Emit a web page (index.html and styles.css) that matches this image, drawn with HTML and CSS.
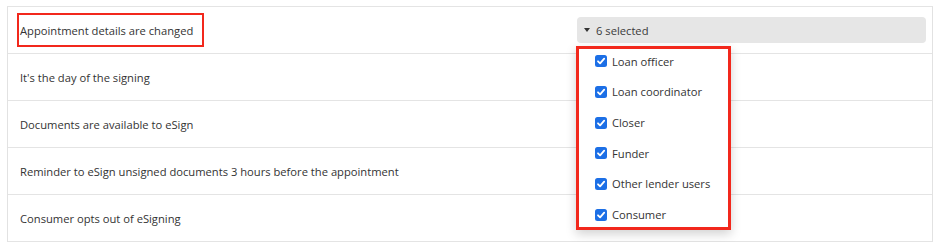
FILE: index.html
```html
<!DOCTYPE html>
<html lang="en">
<head>
    <meta charset="UTF-8">
    <title>Notification settings</title>
    <link rel="stylesheet" href="styles.css">
</head>
<body>
    <div class="table">
        <div class="row">
            <div class="event"><span class="mark">Appointment details are changed</span></div>
            <div class="control">
                <div class="select">
                    <span class="caret"></span>
                    <span>6 selected</span>
                </div>
                <div class="menu">
                    <label class="option"><svg class="check" viewBox="0 0 12 12"><rect width="12" height="12" rx="2.5"/><path d="M3 6.3l2.1 2.1L9.2 3.6"/></svg>Loan officer</label>
                    <label class="option"><svg class="check" viewBox="0 0 12 12"><rect width="12" height="12" rx="2.5"/><path d="M3 6.3l2.1 2.1L9.2 3.6"/></svg>Loan coordinator</label>
                    <label class="option"><svg class="check" viewBox="0 0 12 12"><rect width="12" height="12" rx="2.5"/><path d="M3 6.3l2.1 2.1L9.2 3.6"/></svg>Closer</label>
                    <label class="option"><svg class="check" viewBox="0 0 12 12"><rect width="12" height="12" rx="2.5"/><path d="M3 6.3l2.1 2.1L9.2 3.6"/></svg>Funder</label>
                    <label class="option"><svg class="check" viewBox="0 0 12 12"><rect width="12" height="12" rx="2.5"/><path d="M3 6.3l2.1 2.1L9.2 3.6"/></svg>Other lender users</label>
                    <label class="option"><svg class="check" viewBox="0 0 12 12"><rect width="12" height="12" rx="2.5"/><path d="M3 6.3l2.1 2.1L9.2 3.6"/></svg>Consumer</label>
                </div>
            </div>
        </div>
        <div class="row"><div class="event">It's the day of the signing</div></div>
        <div class="row"><div class="event">Documents are available to eSign</div></div>
        <div class="row"><div class="event">Reminder to eSign unsigned documents 3 hours before the appointment</div></div>
        <div class="row"><div class="event">Consumer opts out of eSigning</div></div>
    </div>
</body>
</html>
```

FILE: styles.css
```css
body {
    margin: 0;
    background: #ffffff;
    font-family: "Open Sans", Arial, sans-serif;
    font-size: 11.2px;
    color: #333333;
}
.table {
    margin: 6px 0 0 7px;
    width: 924px;
    border-left: 1px solid #e2e2e2;
    border-right: 1px solid #e2e2e2;
    border-top: 1px solid #e4e4e4;
}
.row {
    display: flex;
    align-items: center;
    height: 46px;
    border-bottom: 1px solid #e4e4e4;
}
.event {
    flex: 1;
    padding-left: 12px;
}
.mark {
    display: inline-flex;
    align-items: center;
    height: 30px;
    margin-left: -3px;
    padding: 0 9px 0 1px;
    border: 2px solid #f2281c;
}
.control {
    position: relative;
    width: 349px;
    margin-right: 6px;
}
.select {
    display: flex;
    align-items: center;
    height: 26px;
    padding-left: 7px;
    background: #e6e6e6;
    border-radius: 4px;
    color: #3a3a3a;
}
.caret {
    width: 0;
    height: 0;
    margin-right: 6px;
    border-left: 3px solid transparent;
    border-right: 3px solid transparent;
    border-top: 4px solid #333333;
}
.menu {
    position: absolute;
    top: 29px;
    left: -1px;
    width: 155px;
    height: 184px;
    display: grid;
    grid-template-rows: repeat(6, 1fr);
    background: #ffffff;
    outline: 3px solid #f2281c;
    outline-offset: -3px;
    box-shadow: 0 4px 10px rgba(0, 0, 0, 0.18);
    z-index: 2;
}
.option {
    display: flex;
    align-items: center;
    padding-left: 19px;
    color: #333333;
}
.check {
    width: 12px;
    height: 12px;
    margin-right: 5px;
}
.check rect {
    fill: #1c6fe6;
}
.check path {
    fill: none;
    stroke: #ffffff;
    stroke-width: 1.8;
    stroke-linecap: round;
    stroke-linejoin: round;
}
```
